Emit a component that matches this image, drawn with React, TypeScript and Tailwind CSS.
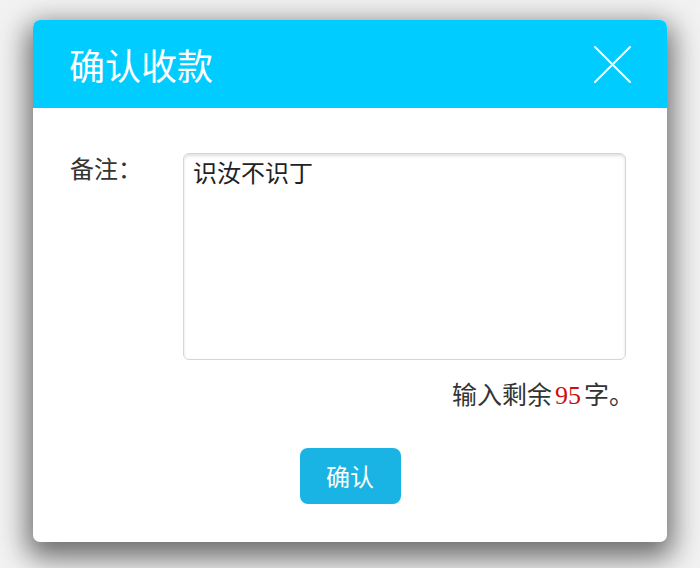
import { useState } from "react";

const cjk = { fontFamily: '"Noto Sans CJK SC", "Noto Sans", sans-serif' };

export default function App() {
  const [note, setNote] = useState("识汝不识丁");
  const left = 100 - note.length;

  return (
    <div className="min-h-[568px] w-[700px] bg-[#f2f2f2] pt-[20px] pl-[33px]" style={cjk}>
      <div className="w-[634px] overflow-hidden rounded-[7px] bg-white shadow-[0_10px_28px_6px_rgba(0,0,0,0.55)]">
        <div className="flex h-[88px] items-center justify-between bg-[#00ccff] pl-[36px] pr-[36px]">
          <h1 className="text-[36px] font-normal leading-none text-white">确认收款</h1>
          <button className="flex h-[37px] w-[37px] items-center justify-center" aria-label="关闭">
            <svg width="37" height="37" viewBox="0 0 37 37" fill="none" stroke="white" strokeWidth="2" strokeLinecap="round">
              <path d="M1 1 L36 36 M36 1 L1 36" />
            </svg>
          </button>
        </div>

        <div className="px-[37px] pb-[38px] pt-[45px]">
          <div className="flex">
            <label className="w-[113px] text-[24px] leading-[30px] text-[#333]">备注：</label>
            <textarea
              value={note}
              onChange={(e) => setNote(e.target.value.slice(0, 100))}
              className="h-[207px] w-[443px] resize-none rounded-[6px] border border-[#d6d6d6] px-[9px] pt-[2px] text-[24px] leading-[32px] text-[#222] shadow-[inset_0_2px_3px_rgba(0,0,0,0.12)] outline-none"
              style={cjk}
            />
          </div>

          <p className="mr-[-4px] mt-[18px] text-right text-[25px] leading-[30px] text-[#333]">
            输入剩余
            <span className="mx-[3px] text-[26px] text-[#cc1111]" style={{ fontFamily: '"Liberation Serif", serif' }}>
              {left}
            </span>
            字。
          </p>

          <div className="mt-[37px] flex justify-center">
            <button className="h-[56px] w-[101px] rounded-[8px] bg-[#1ab4e4] text-[24px] text-white">确认</button>
          </div>
        </div>
      </div>
    </div>
  );
}
